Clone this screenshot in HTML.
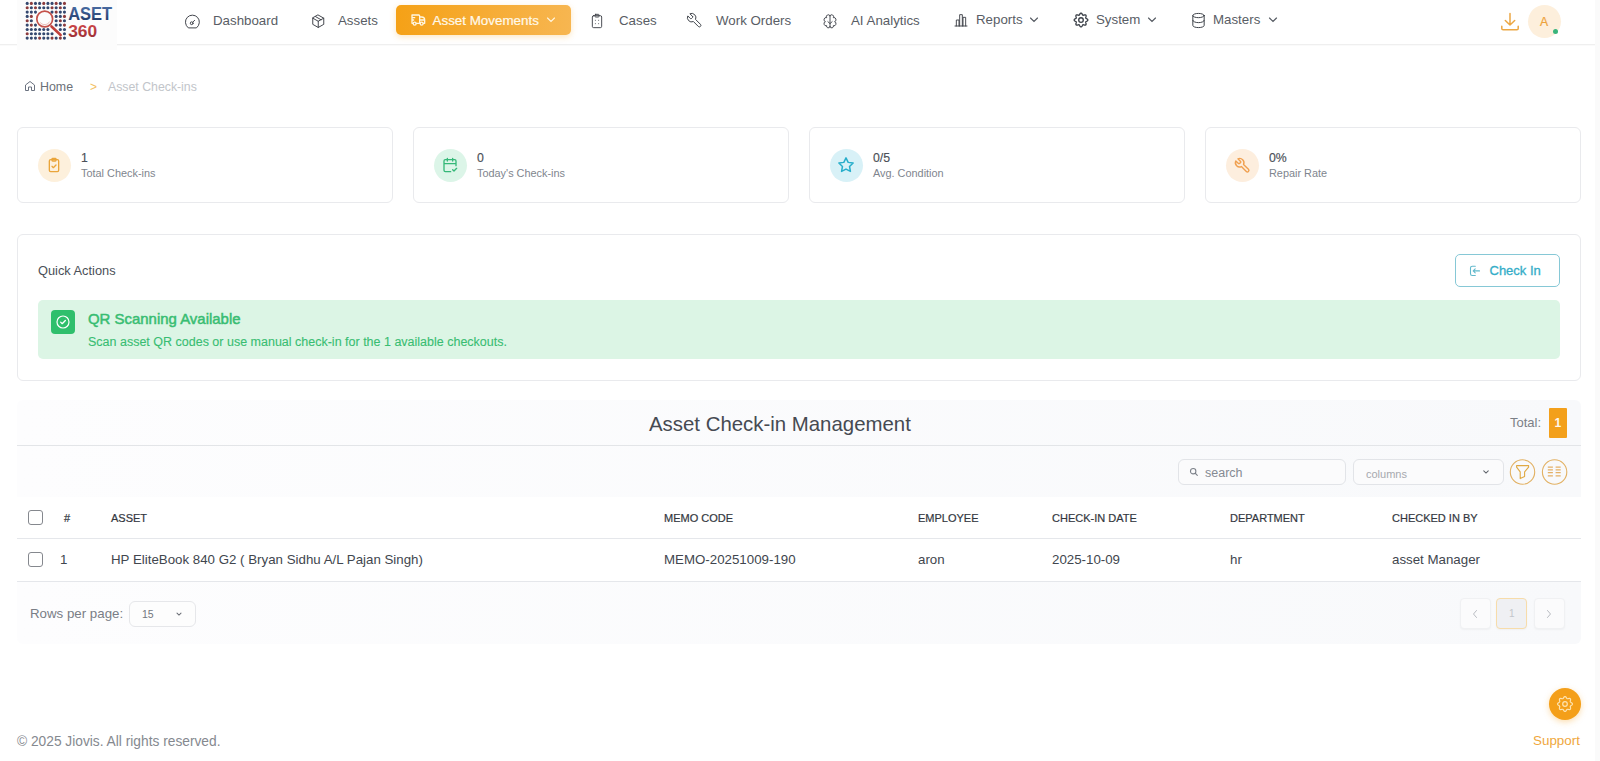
<!DOCTYPE html>
<html><head><meta charset="utf-8">
<style>
*{box-sizing:border-box;margin:0;padding:0}
html,body{width:1600px;height:761px;overflow:hidden;background:#fff;font-family:"Liberation Sans",sans-serif;color:#374151}
.t{position:absolute;white-space:nowrap;line-height:1}
svg{position:absolute;overflow:visible}
#hdr{position:absolute;left:0;top:0;width:1599px;height:45px;border-bottom:1px solid #efefef;background:#fff;box-shadow:0 1px 1px rgba(0,0,0,.02)}
#logo{position:absolute;left:17px;top:0;width:100px;height:50px;background:#fcfcfc}
.nav{position:absolute;top:14px;font-size:13.3px;color:#595d65;line-height:13px;white-space:nowrap}
.ic{fill:none;stroke:#3d4148;stroke-width:1.4;stroke-linecap:round;stroke-linejoin:round}
#am{position:absolute;left:396px;top:5px;width:175px;height:30px;border-radius:5px;background:linear-gradient(95deg,#f5a116,#f7b651);box-shadow:0 2px 6px rgba(245,165,36,.28)}
.card{position:absolute;border:1px solid #e9eaed;border-radius:6px;background:#fff}
.stat{top:127px;width:376px;height:76px}
.circ{position:absolute;left:20px;top:21px;width:33px;height:33px;border-radius:50%}
.sv{position:absolute;left:63px;top:24px;font-size:12.3px;color:#4b5058;line-height:12px;-webkit-text-stroke:0.15px #4b5058}
.sl{position:absolute;left:63px;top:40px;font-size:10.9px;color:#80858e;line-height:11px;white-space:nowrap}
.th{position:absolute;top:513px;font-size:11px;color:#33373e;-webkit-text-stroke:0.2px #33373e;line-height:11px;white-space:nowrap}
.td{position:absolute;top:552.5px;font-size:13.3px;color:#41464e;line-height:13px;white-space:nowrap}
.chk{position:absolute;left:28px;width:15px;height:15px;border:1.7px solid #85888e;border-radius:3px;background:#fff}
.pg{position:absolute;top:598px;width:31px;height:31px;border:1px solid #f0f1f3;border-radius:4px;background:#fbfbfc;box-shadow:0 1px 2px rgba(0,0,0,.04)}
</style></head><body>
<div id="hdr"></div>
<div style="position:absolute;left:1595px;top:0;width:5px;height:761px;background:#fafafa"></div>
<div id="logo"></div>
<svg width="120" height="50" style="left:0;top:0">
  <defs>
    <linearGradient id="lgb" x1="0" y1="0" x2="0" y2="1"><stop offset="0" stop-color="#5277b0"/><stop offset="1" stop-color="#1d3461"/></linearGradient>
    <linearGradient id="lgr" x1="0" y1="0" x2="0" y2="1"><stop offset="0" stop-color="#d5484b"/><stop offset="1" stop-color="#8f2a30"/></linearGradient>
  </defs>
  <circle cx="27.20" cy="3.40" r="1.55" fill="#34486f"/><circle cx="31.34" cy="3.40" r="1.55" fill="#8c3b3d"/><circle cx="35.48" cy="3.40" r="1.55" fill="#34486f"/><circle cx="39.62" cy="3.40" r="1.55" fill="#34486f"/><circle cx="43.76" cy="3.40" r="1.55" fill="#8c3b3d"/><circle cx="47.90" cy="3.40" r="1.55" fill="#34486f"/><circle cx="52.04" cy="3.40" r="1.55" fill="#34486f"/><circle cx="56.18" cy="3.40" r="1.55" fill="#8c3b3d"/><circle cx="60.32" cy="3.40" r="1.55" fill="#34486f"/><circle cx="64.46" cy="3.40" r="1.55" fill="#8c3b3d"/><circle cx="27.20" cy="7.74" r="1.55" fill="#8c3b3d"/><circle cx="31.34" cy="7.74" r="1.55" fill="#34486f"/><circle cx="35.48" cy="7.74" r="1.55" fill="#8c3b3d"/><circle cx="39.62" cy="7.74" r="1.55" fill="#34486f"/><circle cx="43.76" cy="7.74" r="1.55" fill="#34486f"/><circle cx="47.90" cy="7.74" r="1.55" fill="#34486f"/><circle cx="52.04" cy="7.74" r="1.55" fill="#8c3b3d"/><circle cx="56.18" cy="7.74" r="1.55" fill="#34486f"/><circle cx="60.32" cy="7.74" r="1.55" fill="#8c3b3d"/><circle cx="64.46" cy="7.74" r="1.55" fill="#34486f"/><circle cx="27.20" cy="12.08" r="1.55" fill="#34486f"/><circle cx="31.34" cy="12.08" r="1.55" fill="#34486f"/><circle cx="35.48" cy="12.08" r="1.55" fill="#34486f"/><circle cx="52.04" cy="12.08" r="1.55" fill="#34486f"/><circle cx="56.18" cy="12.08" r="1.55" fill="#8c3b3d"/><circle cx="60.32" cy="12.08" r="1.55" fill="#34486f"/><circle cx="64.46" cy="12.08" r="1.55" fill="#34486f"/><circle cx="27.20" cy="16.42" r="1.55" fill="#34486f"/><circle cx="31.34" cy="16.42" r="1.55" fill="#8c3b3d"/><circle cx="56.18" cy="16.42" r="1.55" fill="#34486f"/><circle cx="60.32" cy="16.42" r="1.55" fill="#34486f"/><circle cx="64.46" cy="16.42" r="1.55" fill="#8c3b3d"/><circle cx="27.20" cy="20.76" r="1.55" fill="#8c3b3d"/><circle cx="31.34" cy="20.76" r="1.55" fill="#34486f"/><circle cx="56.18" cy="20.76" r="1.55" fill="#34486f"/><circle cx="60.32" cy="20.76" r="1.55" fill="#8c3b3d"/><circle cx="64.46" cy="20.76" r="1.55" fill="#34486f"/><circle cx="27.20" cy="25.10" r="1.55" fill="#34486f"/><circle cx="31.34" cy="25.10" r="1.55" fill="#8c3b3d"/><circle cx="35.48" cy="25.10" r="1.55" fill="#34486f"/><circle cx="56.18" cy="25.10" r="1.55" fill="#34486f"/><circle cx="60.32" cy="25.10" r="1.55" fill="#34486f"/><circle cx="64.46" cy="25.10" r="1.55" fill="#8c3b3d"/><circle cx="27.20" cy="29.44" r="1.55" fill="#34486f"/><circle cx="31.34" cy="29.44" r="1.55" fill="#34486f"/><circle cx="35.48" cy="29.44" r="1.55" fill="#34486f"/><circle cx="39.62" cy="29.44" r="1.55" fill="#34486f"/><circle cx="43.76" cy="29.44" r="1.55" fill="#34486f"/><circle cx="47.90" cy="29.44" r="1.55" fill="#34486f"/><circle cx="60.32" cy="29.44" r="1.55" fill="#34486f"/><circle cx="64.46" cy="29.44" r="1.55" fill="#34486f"/><circle cx="27.20" cy="33.78" r="1.55" fill="#8c3b3d"/><circle cx="31.34" cy="33.78" r="1.55" fill="#34486f"/><circle cx="35.48" cy="33.78" r="1.55" fill="#34486f"/><circle cx="39.62" cy="33.78" r="1.55" fill="#34486f"/><circle cx="43.76" cy="33.78" r="1.55" fill="#34486f"/><circle cx="47.90" cy="33.78" r="1.55" fill="#34486f"/><circle cx="52.04" cy="33.78" r="1.55" fill="#34486f"/><circle cx="64.46" cy="33.78" r="1.55" fill="#34486f"/><circle cx="27.20" cy="38.12" r="1.55" fill="#34486f"/><circle cx="31.34" cy="38.12" r="1.55" fill="#34486f"/><circle cx="35.48" cy="38.12" r="1.55" fill="#34486f"/><circle cx="39.62" cy="38.12" r="1.55" fill="#8c3b3d"/><circle cx="43.76" cy="38.12" r="1.55" fill="#34486f"/><circle cx="47.90" cy="38.12" r="1.55" fill="#34486f"/><circle cx="52.04" cy="38.12" r="1.55" fill="#8c3b3d"/><circle cx="56.18" cy="38.12" r="1.55" fill="#34486f"/><circle cx="60.32" cy="38.12" r="1.55" fill="#8c3b3d"/><circle cx="64.46" cy="38.12" r="1.55" fill="#34486f"/>
  <circle cx="44.7" cy="19" r="7.9" fill="none" stroke="#c4514a" stroke-width="1.7"/>
  <path d="M40.2 22.5 A5.7 5.7 0 0 0 49.7 21.5" fill="none" stroke="#e3a09a" stroke-width="0.7"/>
  <line x1="51.5" y1="26.5" x2="60.6" y2="35" stroke="#c0403b" stroke-width="2.6" stroke-linecap="round"/>
  <text x="68.2" y="19.7" font-family="Liberation Sans" font-weight="bold" font-size="18.6" fill="url(#lgb)" textLength="44" lengthAdjust="spacingAndGlyphs">ASET</text>
  <text x="68.2" y="37.3" font-family="Liberation Sans" font-weight="bold" font-size="16.8" fill="url(#lgr)" textLength="29" lengthAdjust="spacingAndGlyphs">360</text>
</svg>

<!-- nav -->
<svg width="16.8" height="16.8" style="left:183.8px;top:14.2px" viewBox="0 0 24 24"><path class="ic" d="M5.8 19.5 A10 10 0 1 1 18.2 19.5 Z" stroke-width="2"/><circle class="ic" cx="11" cy="13.2" r="2" stroke-width="2"/><path class="ic" d="M12.5 11.7 L15.2 9" stroke-width="2"/></svg>
<div class="nav" style="left:213px">Dashboard</div>
<svg width="16.5" height="16.5" style="left:309.6px;top:12.6px" viewBox="0 0 24 24"><path class="ic" d="M12 3 L20 7.5 V16.5 L12 21 L4 16.5 V7.5Z M4 7.5 L12 12 L20 7.5 M12 12 V21 M8 5.2 L16 9.8" stroke-width="2"/></svg>
<div class="nav" style="left:338px">Assets</div>
<div id="am"></div>
<svg width="16" height="16" style="left:409.5px;top:12px" viewBox="0 0 24 24"><path d="M3 4.5 H13 A1.5 1.5 0 0 1 14.5 6 V17 M3 8.5 H7 M3 12 H5.5 M3 4.5 V17 H4.5 M9.5 17 H14.5 M14.5 7.5 H17.5 A4.5 4.5 0 0 1 22 12 V17 H20 M14.5 12 H22" fill="none" stroke="#fff6e0" stroke-width="2" stroke-linecap="round" stroke-linejoin="round"/><circle cx="7" cy="17.5" r="2.2" fill="none" stroke="#fff6e0" stroke-width="2"/><circle cx="17.5" cy="17.5" r="2.2" fill="none" stroke="#fff6e0" stroke-width="2"/></svg>
<div class="nav" style="left:432.5px;top:13.5px;color:#fff9ea;font-size:13.4px;-webkit-text-stroke:0.2px #fff9ea">Asset Movements</div>
<svg width="10" height="10" style="left:546px;top:15px" viewBox="0 0 10 10"><path d="M1.5 3 L5 6.5 L8.5 3" fill="none" stroke="#fff6e0" stroke-width="1.1" stroke-linecap="round"/></svg>
<svg width="16" height="16" style="left:589px;top:13px" viewBox="0 0 24 24"><rect class="ic" stroke-width="2" x="5" y="4" width="14" height="18" rx="2"/><rect class="ic" stroke-width="2" x="9" y="2" width="6" height="4" rx="1"/><path class="ic" stroke-width="2.4" d="M9.5 11h.01M14.5 11h.01M9.5 16h.01M14.5 16h.01"/></svg>
<div class="nav" style="left:619px">Cases</div>
<svg width="17" height="17" style="left:686px;top:12px" viewBox="0 0 24 24"><path class="ic" transform="translate(24 0) scale(-1 1)" stroke-width="2" d="M14.7 6.3a1 1 0 0 0 0 1.4l1.6 1.6a1 1 0 0 0 1.4 0l3.77-3.77a6 6 0 0 1-7.94 7.94l-6.91 6.91a2.12 2.12 0 0 1-3-3l6.91-6.91a6 6 0 0 1 7.94-7.94l-3.76 3.76z"/></svg>
<div class="nav" style="left:716px">Work Orders</div>
<svg width="16" height="16" style="left:822px;top:12.5px" viewBox="0 0 24 24"><path class="ic" stroke-width="2" d="M12 4 A1 1 0 0 0 7 7 A1 1 0 0 0 5.2 13 A1 1 0 0 0 7 19 A1 1 0 0 0 12 20.5 M12 4 A1 1 0 0 1 17 7 A1 1 0 0 1 18.8 13 A1 1 0 0 1 17 19 A1 1 0 0 1 12 20.5 M12 4 V20.5 M8.8 13 L12 16 L15.2 13"/></svg>
<div class="nav" style="left:851px">AI Analytics</div>
<svg width="16" height="16" style="left:953px;top:12px" viewBox="0 0 24 24"><path class="ic" stroke-width="2" d="M3 21h18 M5 21V12h4v9 M10 21V4h4v17 M15 21V8h4v13"/></svg>
<div class="nav" style="left:976px;top:13px">Reports</div>
<svg width="10" height="10" style="left:1029px;top:15px" viewBox="0 0 10 10"><path d="M1.5 3 L5 6.5 L8.5 3" fill="none" stroke="#555a62" stroke-width="1.15" stroke-linecap="round"/></svg>
<svg width="1600" height="50" style="left:0;top:0" viewBox="0 0 1600 50"><path d="M1087.85,20.00 L1087.80,20.27 L1087.67,20.52 L1087.45,20.76 L1087.19,20.98 L1086.88,21.17 L1086.58,21.34 L1086.29,21.49 L1086.05,21.64 L1085.87,21.80 L1085.76,21.97 L1085.71,22.17 L1085.73,22.41 L1085.80,22.69 L1085.89,23.00 L1085.99,23.33 L1086.07,23.68 L1086.10,24.02 L1086.09,24.34 L1086.00,24.62 L1085.84,24.84 L1085.62,25.00 L1085.34,25.09 L1085.02,25.10 L1084.68,25.07 L1084.33,24.99 L1084.00,24.89 L1083.69,24.80 L1083.41,24.73 L1083.17,24.71 L1082.97,24.76 L1082.80,24.87 L1082.64,25.05 L1082.49,25.29 L1082.34,25.58 L1082.17,25.88 L1081.98,26.19 L1081.76,26.45 L1081.52,26.67 L1081.27,26.80 L1081.00,26.85 L1080.73,26.80 L1080.48,26.67 L1080.24,26.45 L1080.02,26.19 L1079.83,25.88 L1079.66,25.58 L1079.51,25.29 L1079.36,25.05 L1079.20,24.87 L1079.03,24.76 L1078.83,24.71 L1078.59,24.73 L1078.31,24.80 L1078.00,24.89 L1077.67,24.99 L1077.32,25.07 L1076.98,25.10 L1076.66,25.09 L1076.38,25.00 L1076.16,24.84 L1076.00,24.62 L1075.91,24.34 L1075.90,24.02 L1075.93,23.68 L1076.01,23.33 L1076.11,23.00 L1076.20,22.69 L1076.27,22.41 L1076.29,22.17 L1076.24,21.97 L1076.13,21.80 L1075.95,21.64 L1075.71,21.49 L1075.42,21.34 L1075.12,21.17 L1074.81,20.98 L1074.55,20.76 L1074.33,20.52 L1074.20,20.27 L1074.15,20.00 L1074.20,19.73 L1074.33,19.48 L1074.55,19.24 L1074.81,19.02 L1075.12,18.83 L1075.42,18.66 L1075.71,18.51 L1075.95,18.36 L1076.13,18.20 L1076.24,18.03 L1076.29,17.83 L1076.27,17.59 L1076.20,17.31 L1076.11,17.00 L1076.01,16.67 L1075.93,16.32 L1075.90,15.98 L1075.91,15.66 L1076.00,15.38 L1076.16,15.16 L1076.38,15.00 L1076.66,14.91 L1076.98,14.90 L1077.32,14.93 L1077.67,15.01 L1078.00,15.11 L1078.31,15.20 L1078.59,15.27 L1078.83,15.29 L1079.03,15.24 L1079.20,15.13 L1079.36,14.95 L1079.51,14.71 L1079.66,14.42 L1079.83,14.12 L1080.02,13.81 L1080.24,13.55 L1080.48,13.33 L1080.73,13.20 L1081.00,13.15 L1081.27,13.20 L1081.52,13.33 L1081.76,13.55 L1081.98,13.81 L1082.17,14.12 L1082.34,14.42 L1082.49,14.71 L1082.64,14.95 L1082.80,15.13 L1082.97,15.24 L1083.17,15.29 L1083.41,15.27 L1083.69,15.20 L1084.00,15.11 L1084.33,15.01 L1084.68,14.93 L1085.02,14.90 L1085.34,14.91 L1085.62,15.00 L1085.84,15.16 L1086.00,15.38 L1086.09,15.66 L1086.10,15.98 L1086.07,16.32 L1085.99,16.67 L1085.89,17.00 L1085.80,17.31 L1085.73,17.59 L1085.71,17.83 L1085.76,18.03 L1085.87,18.20 L1086.05,18.36 L1086.29,18.51 L1086.58,18.66 L1086.88,18.83 L1087.19,19.02 L1087.45,19.24 L1087.67,19.48 L1087.80,19.73Z" fill="none" stroke="#3f444c" stroke-width="1.35" stroke-linejoin="round"/><circle cx="1081" cy="20" r="2.3" fill="none" stroke="#3f444c" stroke-width="1.35"/></svg>
<div class="nav" style="left:1096px;top:13px">System</div>
<svg width="10" height="10" style="left:1146.5px;top:15px" viewBox="0 0 10 10"><path d="M1.5 3 L5 6.5 L8.5 3" fill="none" stroke="#555a62" stroke-width="1.15" stroke-linecap="round"/></svg>
<svg width="17" height="17" style="left:1190px;top:11.5px" viewBox="0 0 24 24"><ellipse class="ic" stroke-width="2" cx="12" cy="5" rx="8" ry="3"/><path class="ic" stroke-width="2" d="M4 5v14a8 3 0 0 0 16 0V5 M4 12a8 3 0 0 0 16 0"/></svg>
<div class="nav" style="left:1213px;top:13px">Masters</div>
<svg width="10" height="10" style="left:1268px;top:15px" viewBox="0 0 10 10"><path d="M1.5 3 L5 6.5 L8.5 3" fill="none" stroke="#555a62" stroke-width="1.15" stroke-linecap="round"/></svg>

<!-- right header -->
<svg width="20" height="20" style="left:1500px;top:11px" viewBox="0 0 20 20"><path d="M10 2.5 V14 M5.3 9.5 L10 14 L14.7 9.5 M1.8 15.2 V17.5 Q1.8 18.8 3.1 18.8 H16.9 Q18.2 18.8 18.2 17.5 V15.2" fill="none" stroke="#eca744" stroke-width="1.5" stroke-linecap="round" stroke-linejoin="round"/></svg>
<div style="position:absolute;left:1528px;top:4.5px;width:33px;height:33px;border-radius:50%;background:#fdefdc"></div>
<div class="t" style="left:1540px;top:16px;font-size:12.2px;color:#eea23a;-webkit-text-stroke:0.2px #eea23a">A</div>
<div style="position:absolute;left:1552.8px;top:28.9px;width:5.3px;height:5.3px;border-radius:50%;background:#38b47c"></div>

<!-- breadcrumb -->
<svg width="12" height="12" style="left:24px;top:80px" viewBox="0 0 24 24"><path d="M3 10 L12 3 L21 10 V21 H15 V14 H9 V21 H3Z" fill="none" stroke="#6b7280" stroke-width="2" stroke-linejoin="round"/></svg>
<div class="t" style="left:40px;top:81px;font-size:12.4px;color:#6b7078">Home</div>
<div class="t" style="left:90px;top:81px;font-size:12px;color:#f3c062">&gt;</div>
<div class="t" style="left:108px;top:81px;font-size:12.3px;color:#c2c5ca">Asset Check-ins</div>

<!-- stat cards -->
<div class="card stat" style="left:17px">
  <div class="circ" style="background:#fdf0dc"></div>
  <svg width="16" height="16" style="left:28px;top:29px" viewBox="0 0 24 24"><rect x="5" y="4" width="14" height="18" rx="2" fill="none" stroke="#eaa53a" stroke-width="2"/><rect x="9" y="2" width="6" height="4" rx="1" fill="none" stroke="#eaa53a" stroke-width="2"/><path d="M9 14 l2 2 4-4" fill="none" stroke="#eaa53a" stroke-width="2" stroke-linecap="round" stroke-linejoin="round"/></svg>
  <div class="sv">1</div><div class="sl">Total Check-ins</div>
</div>
<div class="card stat" style="left:413px">
  <div class="circ" style="background:#dcf5e8"></div>
  <svg width="16" height="16" style="left:28px;top:29px" viewBox="0 0 24 24"><path d="M21 13V6a2 2 0 0 0-2-2H5a2 2 0 0 0-2 2v14a2 2 0 0 0 2 2h8 M16 2v4 M8 2v4 M3 10h18 M16 19l2 2 4-4" fill="none" stroke="#35b878" stroke-width="2" stroke-linecap="round" stroke-linejoin="round"/></svg>
  <div class="sv">0</div><div class="sl">Today's Check-ins</div>
</div>
<div class="card stat" style="left:809px">
  <div class="circ" style="background:#d8f1f7"></div>
  <svg width="18" height="18" style="left:27px;top:28px" viewBox="0 0 24 24"><path d="M12 2.5l2.9 6 6.6.9-4.8 4.6 1.2 6.5L12 17.4l-5.9 3.1 1.2-6.5L2.5 9.4l6.6-.9z" fill="none" stroke="#27aecb" stroke-width="2" stroke-linejoin="round"/></svg>
  <div class="sv">0/5</div><div class="sl">Avg. Condition</div>
</div>
<div class="card stat" style="left:1205px">
  <div class="circ" style="background:#fdeede"></div>
  <svg width="17" height="17" style="left:28px;top:29px" viewBox="0 0 24 24"><path d="M14.7 6.3a1 1 0 0 0 0 1.4l1.6 1.6a1 1 0 0 0 1.4 0l3.77-3.77a6 6 0 0 1-7.94 7.94l-6.91 6.91a2.12 2.12 0 0 1-3-3l6.91-6.91a6 6 0 0 1 7.94-7.94l-3.76 3.76z" transform="translate(24 0) scale(-1 1)" fill="none" stroke="#f0a050" stroke-width="2" stroke-linejoin="round"/></svg>
  <div class="sv">0%</div><div class="sl">Repair Rate</div>
</div>

<!-- quick actions -->
<div class="card" style="left:17px;top:234px;width:1564px;height:147px">
  <div class="t" style="left:20px;top:30px;font-size:12.8px;color:#4b5058">Quick Actions</div>
  <div style="position:absolute;left:1437px;top:19px;width:105px;height:33px;border:1px solid #86c8d6;border-radius:5px"></div>
  
  <div class="t" style="left:1471.5px;top:29.3px;font-size:13px;font-weight:normal;color:#35adc8;-webkit-text-stroke:0.3px #35adc8">Check In</div>
  <div style="position:absolute;left:20px;top:65px;width:1522px;height:59px;border-radius:5px;background:#dcf5e5"></div>
  <div style="position:absolute;left:33px;top:75px;width:24px;height:24px;border-radius:4px;background:#2fbf6c"></div>
  <svg width="16" height="16" style="left:37px;top:79px" viewBox="0 0 24 24"><circle cx="12" cy="12" r="9" fill="none" stroke="#fff" stroke-width="1.8"/><path d="M8.5 12.2l2.3 2.3 4.7-4.8" fill="none" stroke="#fff" stroke-width="2" stroke-linecap="round" stroke-linejoin="round"/></svg>
  <div class="t" style="left:70px;top:76.5px;font-size:14.95px;font-weight:normal;color:#38bd72;-webkit-text-stroke:0.5px #38bd72">QR Scanning Available</div>
  <div class="t" style="left:70px;top:100.5px;font-size:12.5px;color:#38bd72;-webkit-text-stroke:0.1px #38bd72">Scan asset QR codes or use manual check-in for the 1 available checkouts.</div>
</div>

<svg width="1600" height="761" style="left:0;top:0" viewBox="0 0 1600 761"><path d="M1475.3 266.3 H1472.3 Q1470.5 266.3 1470.5 268.1 V273.7 Q1470.5 275.5 1472.3 275.5 H1475.3" fill="none" stroke="#62b9cc" stroke-width="1.1" stroke-linecap="round"/><path d="M1479.5 270.9 H1473.2 M1475.2 268.9 L1473.2 270.9 L1475.2 272.9" fill="none" stroke="#62b9cc" stroke-width="1.1" stroke-linecap="round" stroke-linejoin="round"/></svg>
<!-- table section -->
<div style="position:absolute;left:17px;top:400px;width:1564px;height:244px;background:linear-gradient(90deg,#fdfdfe,#f8f9fb);border-radius:6px"></div>
<div class="t" style="left:649px;top:413.5px;font-size:20.4px;color:#464a52">Asset Check-in Management</div>
<div class="t" style="left:1510px;top:416px;font-size:13px;color:#7b7f86">Total:</div>
<div style="position:absolute;left:1549px;top:407.5px;width:18px;height:30.5px;background:#f3a01b;border-radius:1px"></div>
<div class="t" style="left:1554.5px;top:417px;font-size:12px;font-weight:bold;color:#fff8ec">1</div>
<div style="position:absolute;left:17px;top:445px;width:1564px;height:1px;background:#e3e5e8"></div>
<div style="position:absolute;left:1178px;top:459px;width:168px;height:26px;border:1px solid #e2e4e8;border-radius:6px;background:#fbfbfc"></div>
<svg width="10" height="10" style="left:1189px;top:467px" viewBox="0 0 24 24"><circle cx="10" cy="10" r="6.5" fill="none" stroke="#7d828a" stroke-width="2.6"/><path d="M15 15l5 5" stroke="#7d828a" stroke-width="2.6" stroke-linecap="round"/></svg>
<div class="t" style="left:1205px;top:466.5px;font-size:12.5px;color:#858a93">search</div>
<div style="position:absolute;left:1353px;top:459px;width:151px;height:26px;border:1px solid #e2e4e8;border-radius:6px;background:#fbfbfc"></div>
<div class="t" style="left:1366px;top:469px;font-size:11px;color:#a6a9ae">columns</div>
<svg width="8" height="8" style="left:1482px;top:468px" viewBox="0 0 10 10"><path d="M2.2 3.5 L5 6.3 L7.8 3.5" fill="none" stroke="#5f636a" stroke-width="1.3" stroke-linecap="round"/></svg>
<svg width="1600" height="761" style="left:0;top:0" viewBox="0 0 1600 761">
<circle cx="1522.5" cy="472" r="12.2" fill="none" stroke="#e2b163" stroke-width="1.1"/>
<path d="M1516.6 465.6 H1528.6 V467.2 L1524.6 471.9 V476.6 L1520.2 478.6 V471.9 L1516.6 467.2 Z" fill="none" stroke="#e0a943" stroke-width="1.1" stroke-linejoin="round"/>
<circle cx="1554.6" cy="472" r="12.2" fill="none" stroke="#e2b163" stroke-width="1.1"/>
<path d="M1547.8 467.1 H1552.9 M1555.6 467.1 H1560.7 M1547.8 469.9 H1552.9 M1555.6 469.9 H1560.7 M1547.8 472.7 H1552.9 M1555.6 472.7 H1560.7 M1547.8 475.8 H1552.9 M1555.6 475.8 H1560.7" fill="none" stroke="#e4b066" stroke-width="1.3"/>
</svg>
<div style="position:absolute;left:17px;top:497px;width:1564px;height:85px;background:#fff"></div>
<div style="position:absolute;left:17px;top:538px;width:1564px;height:1px;background:#e5e7eb"></div>
<div style="position:absolute;left:17px;top:581px;width:1564px;height:1px;background:#e5e7eb"></div>
<div class="chk" style="top:510px"></div>
<div class="th" style="left:64px">#</div>
<div class="th" style="left:111px">ASSET</div>
<div class="th" style="left:664px">MEMO CODE</div>
<div class="th" style="left:918px">EMPLOYEE</div>
<div class="th" style="left:1052px">CHECK-IN DATE</div>
<div class="th" style="left:1230px">DEPARTMENT</div>
<div class="th" style="left:1392px">CHECKED IN BY</div>
<div class="chk" style="top:552px"></div>
<div class="td" style="left:60px">1</div>
<div class="td" style="left:111px">HP EliteBook 840 G2 ( Bryan Sidhu A/L Pajan Singh)</div>
<div class="td" style="left:664px">MEMO-20251009-190</div>
<div class="td" style="left:918px">aron</div>
<div class="td" style="left:1052px">2025-10-09</div>
<div class="td" style="left:1230px">hr</div>
<div class="td" style="left:1392px">asset Manager</div>

<div class="t" style="left:30px;top:606.5px;font-size:13.3px;color:#7a7e86">Rows per page:</div>
<div style="position:absolute;left:129px;top:601px;width:67px;height:25.5px;border:1px solid #e6e7ea;border-radius:6px;background:#fdfdfd"></div>
<div class="t" style="left:142px;top:608.5px;font-size:10.5px;color:#73777e">15</div>
<svg width="8" height="8" style="left:175px;top:610px" viewBox="0 0 10 10"><path d="M2.5 3.8 L5 6.3 L7.5 3.8" fill="none" stroke="#6b6f76" stroke-width="1.3" stroke-linecap="round"/></svg>
<div class="pg" style="left:1459.5px"></div>
<svg width="8" height="10" style="left:1471px;top:608.5px" viewBox="0 0 8 10"><path d="M5.5 1.5 L2.5 5 L5.5 8.5" fill="none" stroke="#b9bcc2" stroke-width="1" stroke-linecap="round"/></svg>
<div class="pg" style="left:1496px;border-color:#f7dcaa;background:#eff0f3"></div>
<div class="t" style="left:1509px;top:609px;font-size:10px;color:#c3c6cb">1</div>
<div class="pg" style="left:1533.5px"></div>
<svg width="8" height="10" style="left:1544.5px;top:608.5px" viewBox="0 0 8 10"><path d="M2.5 1.5 L5.5 5 L2.5 8.5" fill="none" stroke="#b9bcc2" stroke-width="1" stroke-linecap="round"/></svg>

<!-- footer -->
<div class="t" style="left:17px;top:734.5px;font-size:13.75px;color:#85898f">© 2025 Jiovis. All rights reserved.</div>
<div class="t" style="left:1533px;top:734px;font-size:13.4px;color:#efa73c">Support</div>
<div style="position:absolute;left:1549px;top:688px;width:32px;height:32px;border-radius:50%;background:#f49f19;box-shadow:0 2px 6px rgba(244,159,25,.35)"></div>
<svg width="1600" height="761" style="left:0;top:0;pointer-events:none" viewBox="0 0 1600 761"><path d="M1572.45,704.00 L1572.40,704.29 L1572.27,704.57 L1572.05,704.83 L1571.78,705.07 L1571.47,705.29 L1571.16,705.48 L1570.87,705.66 L1570.62,705.83 L1570.43,706.00 L1570.31,706.20 L1570.26,706.42 L1570.27,706.68 L1570.32,706.98 L1570.40,707.31 L1570.49,707.67 L1570.55,708.03 L1570.58,708.40 L1570.54,708.73 L1570.44,709.03 L1570.27,709.27 L1570.03,709.44 L1569.73,709.54 L1569.40,709.58 L1569.03,709.55 L1568.67,709.49 L1568.31,709.40 L1567.98,709.32 L1567.68,709.27 L1567.42,709.26 L1567.20,709.31 L1567.00,709.43 L1566.83,709.62 L1566.66,709.87 L1566.48,710.16 L1566.29,710.47 L1566.07,710.78 L1565.83,711.05 L1565.57,711.27 L1565.29,711.40 L1565.00,711.45 L1564.71,711.40 L1564.43,711.27 L1564.17,711.05 L1563.93,710.78 L1563.71,710.47 L1563.52,710.16 L1563.34,709.87 L1563.17,709.62 L1563.00,709.43 L1562.80,709.31 L1562.58,709.26 L1562.32,709.27 L1562.02,709.32 L1561.69,709.40 L1561.33,709.49 L1560.97,709.55 L1560.60,709.58 L1560.27,709.54 L1559.97,709.44 L1559.73,709.27 L1559.56,709.03 L1559.46,708.73 L1559.42,708.40 L1559.45,708.03 L1559.51,707.67 L1559.60,707.31 L1559.68,706.98 L1559.73,706.68 L1559.74,706.42 L1559.69,706.20 L1559.57,706.00 L1559.38,705.83 L1559.13,705.66 L1558.84,705.48 L1558.53,705.29 L1558.22,705.07 L1557.95,704.83 L1557.73,704.57 L1557.60,704.29 L1557.55,704.00 L1557.60,703.71 L1557.73,703.43 L1557.95,703.17 L1558.22,702.93 L1558.53,702.71 L1558.84,702.52 L1559.13,702.34 L1559.38,702.17 L1559.57,702.00 L1559.69,701.80 L1559.74,701.58 L1559.73,701.32 L1559.68,701.02 L1559.60,700.69 L1559.51,700.33 L1559.45,699.97 L1559.42,699.60 L1559.46,699.27 L1559.56,698.97 L1559.73,698.73 L1559.97,698.56 L1560.27,698.46 L1560.60,698.42 L1560.97,698.45 L1561.33,698.51 L1561.69,698.60 L1562.02,698.68 L1562.32,698.73 L1562.58,698.74 L1562.80,698.69 L1563.00,698.57 L1563.17,698.38 L1563.34,698.13 L1563.52,697.84 L1563.71,697.53 L1563.93,697.22 L1564.17,696.95 L1564.43,696.73 L1564.71,696.60 L1565.00,696.55 L1565.29,696.60 L1565.57,696.73 L1565.83,696.95 L1566.07,697.22 L1566.29,697.53 L1566.48,697.84 L1566.66,698.13 L1566.83,698.38 L1567.00,698.57 L1567.20,698.69 L1567.42,698.74 L1567.68,698.73 L1567.98,698.68 L1568.31,698.60 L1568.67,698.51 L1569.03,698.45 L1569.40,698.42 L1569.73,698.46 L1570.03,698.56 L1570.27,698.73 L1570.44,698.97 L1570.54,699.27 L1570.58,699.60 L1570.55,699.97 L1570.49,700.33 L1570.40,700.69 L1570.32,701.02 L1570.27,701.32 L1570.26,701.58 L1570.31,701.80 L1570.43,702.00 L1570.62,702.17 L1570.87,702.34 L1571.16,702.52 L1571.47,702.71 L1571.78,702.93 L1572.05,703.17 L1572.27,703.43 L1572.40,703.71Z" fill="none" stroke="#fde3b0" stroke-width="1.2" stroke-linejoin="round"/><circle cx="1565" cy="704" r="2.3" fill="none" stroke="#fde3b0" stroke-width="1.2"/></svg>

</body></html>
